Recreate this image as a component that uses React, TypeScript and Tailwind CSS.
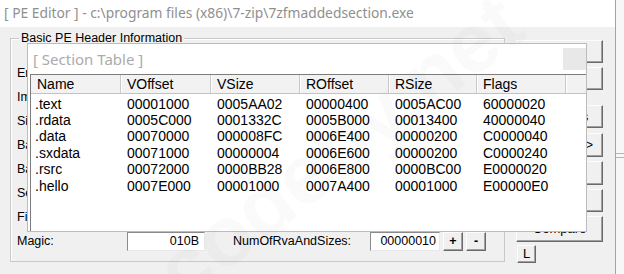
import React from "react";

interface Section {
  name: string;
  voffset: string;
  vsize: string;
  roffset: string;
  rsize: string;
  flags: string;
}

const sections: Section[] = [
  { name: ".text", voffset: "00001000", vsize: "0005AA02", roffset: "00000400", rsize: "0005AC00", flags: "60000020" },
  { name: ".rdata", voffset: "0005C000", vsize: "0001332C", roffset: "0005B000", rsize: "00013400", flags: "40000040" },
  { name: ".data", voffset: "00070000", vsize: "000008FC", roffset: "0006E400", rsize: "00000200", flags: "C0000040" },
  { name: ".sxdata", voffset: "00071000", vsize: "00000004", roffset: "0006E600", rsize: "00000200", flags: "C0000240" },
  { name: ".rsrc", voffset: "00072000", vsize: "0000BB28", roffset: "0006E800", rsize: "0000BC00", flags: "E0000020" },
  { name: ".hello", voffset: "0007E000", vsize: "00001000", roffset: "0007A400", rsize: "00001000", flags: "E00000E0" },
];

const columns = [
  { label: "Name", key: "name", w: "w-[90px]" },
  { label: "VOffset", key: "voffset", w: "w-[90px]" },
  { label: "VSize", key: "vsize", w: "w-[89px]" },
  { label: "ROffset", key: "roffset", w: "w-[89px]" },
  { label: "RSize", key: "rsize", w: "w-[88px]" },
  { label: "Flags", key: "flags", w: "w-[89px]" },
] as const;

const headerLabels = [
  "Entry Point:",
  "Image Base:",
  "Size Of Image:",
  "Base Of Code:",
  "Base Of Data:",
  "Section Alignment:",
  "File Alignment:",
];

// classic raised win32 button
const raised =
  "bg-[#f0f0f0] border border-t-[#fcfcfc] border-l-[#fcfcfc] border-r-[#6a6a6a] border-b-[#6a6a6a] shadow-[inset_-1px_-1px_0_#a0a0a0]";
const sunken =
  "bg-white border border-t-[#8a8a8a] border-l-[#8a8a8a] border-r-[#e8e8e8] border-b-[#e8e8e8]";

export default function App() {
  return (
    <div className="relative w-[624px] h-[274px] overflow-hidden bg-[#f0f0f0] flex font-['Liberation_Sans',Arial,sans-serif] text-[12px] text-black">
      {/* Main window */}
      <div className="w-[616px] h-full flex flex-col border-r border-[#a3a3a3]">
        <div className="h-[27px] bg-white pl-[4px] leading-[25px] text-[13.8px] text-[#8f8f8f] font-['Noto_Sans',sans-serif] whitespace-nowrap">
          [ PE Editor ] - c:\program files (x86)\7-zip\7zfmaddedsection.exe
        </div>

        <div className="flex pl-[10px] pt-[11px]">
          {/* Group box */}
          <div className="relative w-[495px] h-[224px] border border-[#c9c9c9] shadow-[inset_1px_1px_0_#ffffff]">
            <div className="absolute -top-[8px] left-[8px] bg-[#f0f0f0] px-[2px] leading-[14px] text-[12.5px]">
              Basic PE Header Information
            </div>
            <div className="flex flex-col pt-[22px] pl-[6px]">
              {headerLabels.map((l) => (
                <div key={l} className="h-[24px] flex items-center text-[12.5px]">
                  <span className="w-[110px] overflow-hidden whitespace-nowrap">{l}</span>
                  <div className={`${sunken} w-[78px] h-[18px]`} />
                </div>
              ))}
              <div className="h-[24px] flex items-center text-[12.5px]">
                <span className="w-[110px]">Magic:</span>
                <div className={`${sunken} w-[78px] h-[19px] flex items-center justify-end pr-[5px]`}>
                  010B
                </div>
                <span className="ml-[28px] w-[137px]">NumOfRvaAndSizes:</span>
                <div className={`${sunken} w-[70px] h-[19px] flex items-center justify-end pr-[3px]`}>
                  00000010
                </div>
                <button className={`${raised} ml-[3px] w-[20px] h-[19px] flex items-center justify-center font-bold leading-none`}>
                  +
                </button>
                <button className={`${raised} ml-[3px] w-[20px] h-[19px] flex items-center justify-center font-bold leading-none`}>
                  -
                </button>
              </div>
            </div>
          </div>

          {/* Button column */}
          <div className="ml-[11px] w-[87px] flex flex-col pt-[2px]">
            <button className={`${raised} h-[23px]`}>Save</button>
            <button className={`${raised} h-[23px] mt-[4px]`}>Load</button>
            <button className={`${raised} h-[23px] mt-[15px]`}>Directories</button>
            <button className={`${raised} h-[24px] mt-[5px] text-right pr-[9px]`}>Sections &gt;</button>
            <button className={`${raised} h-[24px] mt-[4px]`}>FLC</button>
            <button className={`${raised} h-[23px] mt-[4px]`}>TDSC</button>
            <button className={`${raised} h-[26px] mt-[4px] text-[13px]`}>Compare</button>
            <button className={`${raised} w-[19px] h-[18px] mt-[3px] ml-[1px] flex items-center justify-center text-[13px]`}>
              L
            </button>
          </div>
        </div>
      </div>

      {/* Right strip outside the window */}
      <div className="flex-1 h-full bg-[#f7f7f7] pt-[153px]">
        <div className="h-[5px] border-t border-b border-[#b5b5b5]" />
      </div>

      {/* Section Table dialog */}
      <div className="absolute left-[27px] top-[43px] w-[560px] h-[189px] bg-white border border-[#bcbcbc] flex flex-col text-[14px]">
        <div className="h-[30px] flex items-start">
          <span className="pl-[5px] pt-[5px] leading-[20px] text-[15px] text-[#ababab] font-['Noto_Sans',sans-serif]">
            [ Section Table ]
          </span>
          <div className="ml-auto mt-[4px] w-[23px] h-[22px] bg-[#e8e8e8]" />
        </div>
        <div className="flex-1 ml-[2px] border-t border-l border-[#7c7c7c] flex flex-col">
          <div className="h-[19px] flex bg-[#f2f2f2] border-b border-[#c3c3c3]">
            {columns.map((c) => (
              <div
                key={c.key}
                className={`${c.w} h-full flex items-center pl-[6px] border-r border-[#c9c9c9] shadow-[1px_0_0_#ffffff]`}
              >
                {c.label}
              </div>
            ))}
            <div className="flex-1" />
          </div>
          <div className="pt-[2px]">
            {sections.map((s) => (
              <div key={s.name} className="flex h-[16.4px] items-center">
                {columns.map((c) => (
                  <div key={c.key} className={`${c.w} ${c.key === "name" ? "pl-[4px]" : "pl-[6px]"}`}>
                    {s[c.key]}
                  </div>
                ))}
              </div>
            ))}
          </div>
        </div>
      </div>

      {/* watermark */}
      <div className="absolute left-[120px] top-[105px] -rotate-[38deg] text-[84px] font-bold leading-none text-black/[0.02] font-['Liberation_Sans',sans-serif] pointer-events-none whitespace-nowrap">
        codeby.net
      </div>
    </div>
  );
}
